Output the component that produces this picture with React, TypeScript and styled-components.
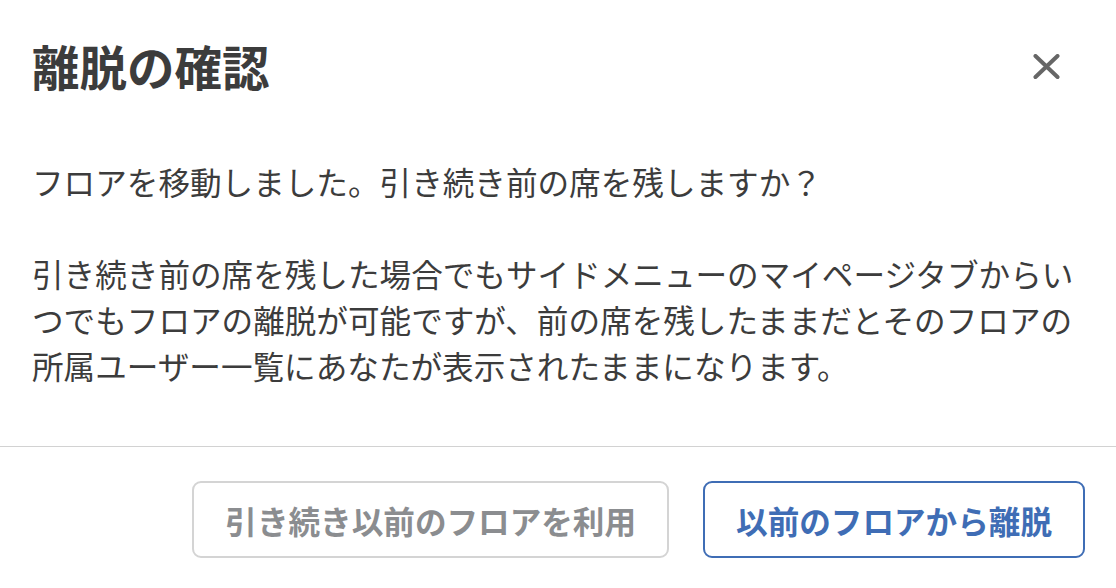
import React from "react";
import styled, { createGlobalStyle } from "styled-components";

const Global = createGlobalStyle`
  html, body { margin: 0; padding: 0; background: #ffffff; }
  body { font-family: "Noto Sans CJK JP", "Noto Sans", sans-serif; }
  * { box-sizing: border-box; }
`;

const Dialog = styled.div`
  width: 1116px;
  height: 588px;
  background: #ffffff;
  display: flex;
  flex-direction: column;
`;

const Header = styled.header`
  display: flex;
  align-items: center;
  justify-content: space-between;
  padding: 29px 32px 0 32px;
  height: 103px;
`;

const Title = styled.h1`
  margin: 0;
  font-size: 47.5px;
  line-height: 70px;
  font-weight: 700;
  color: #3c3c3c;
`;

const CloseButton = styled.button`
  width: 40px;
  height: 40px;
  margin-right: 18px;
  padding: 0;
  border: none;
  background: transparent;
  display: flex;
  align-items: center;
  justify-content: center;
  cursor: pointer;
`;

const Body = styled.div`
  padding: 55px 32px 58px 32px;
  display: flex;
  flex-direction: column;
  gap: 46px;
`;

const Paragraph = styled.p`
  margin: 0;
  font-size: 31.6px;
  line-height: 46px;
  color: #3c3c3c;
`;

const Footer = styled.footer`
  border-top: 1.5px solid #d2d2d2;
  padding: 34px 31px 0 32px;
  display: flex;
  justify-content: flex-end;
  gap: 34px;
`;

const Button = styled.button<{ $primary?: boolean }>`
  height: 77px;
  padding: 0 31px;
  border-radius: 9px;
  background: #ffffff;
  border: 2px solid ${(p) => (p.$primary ? "#3f6db5" : "#d4d4d4")};
  color: ${(p) => (p.$primary ? "#3f6db5" : "#8b8d90")};
  font-family: "Noto Sans CJK JP", "Noto Sans", sans-serif;
  font-size: 31.6px;
  font-weight: 700;
  line-height: 46px;
  cursor: pointer;
`;

export default function App() {
  return (
    <>
      <Global />
      <Dialog>
        <Header>
          <Title>離脱の確認</Title>
          <CloseButton aria-label="閉じる">
            <svg width="27" height="25" viewBox="0 0 27 25">
              <path
                d="M2.5 2 L24.5 23 M24.5 2 L2.5 23"
                stroke="#666666"
                strokeWidth="4"
                strokeLinecap="round"
              />
            </svg>
          </CloseButton>
        </Header>
        <Body>
          <Paragraph>フロアを移動しました。引き続き前の席を残しますか？</Paragraph>
          <Paragraph>
            引き続き前の席を残した場合でもサイドメニューのマイページタブからいつでもフロアの離脱が可能ですが、前の席を残したままだとそのフロアの所属ユーザー一覧にあなたが表示されたままになります。
          </Paragraph>
        </Body>
        <Footer>
          <Button>引き続き以前のフロアを利用</Button>
          <Button $primary>以前のフロアから離脱</Button>
        </Footer>
      </Dialog>
    </>
  );
}
